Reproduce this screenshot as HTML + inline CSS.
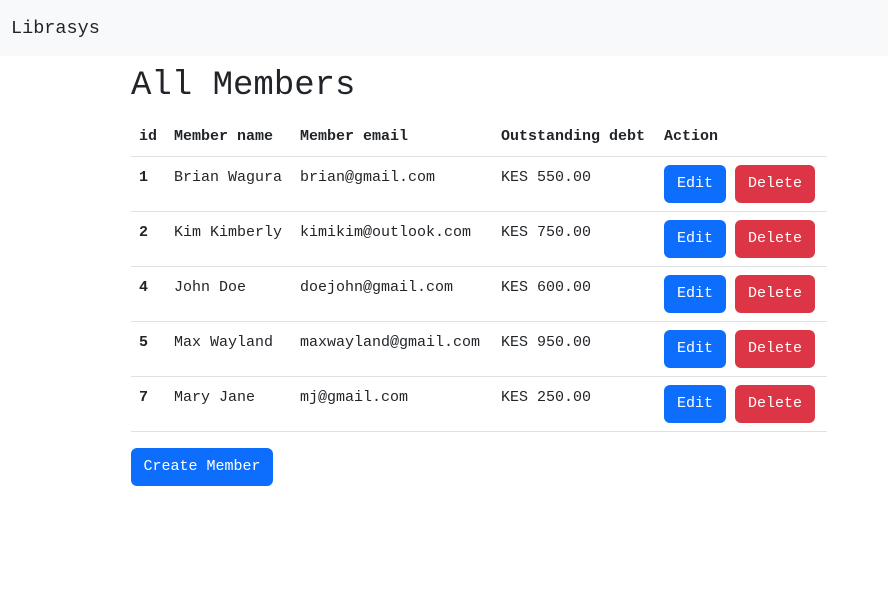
<!DOCTYPE html>
<html><head><meta charset="utf-8"><style>
*{box-sizing:border-box;margin:0;padding:0}
body{width:888px;height:599px;background:#fff;font-family:"Liberation Mono","DejaVu Sans Mono",monospace;color:#212529;position:relative;overflow:hidden}
.nav{position:absolute;left:0;top:0;width:888px;height:56px;background:#f8f9fa}
.brand{position:absolute;left:11px;top:18px;font-size:18.5px;color:#212529}
h1{position:absolute;left:131px;top:64px;font-size:34px;font-weight:normal;line-height:44px}
.t{position:absolute;font-size:15px;line-height:20px}
.b{font-weight:bold}
.line{position:absolute;left:131px;width:696px;height:1px;background:#dee2e6}
.btn{position:absolute;height:38px;border-radius:6px;color:#fff;font-size:15px;line-height:38px;text-align:center}
.e{background:#0d6efd;width:62px;left:664px}
.d{background:#dc3545;width:80px;left:735px}
</style></head><body>
<div class="nav"><div class="brand">Librasys</div></div>
<h1>All Members</h1>
<div class="t b" style="left:139px;top:127px">id</div>
<div class="t b" style="left:174px;top:127px">Member name</div>
<div class="t b" style="left:300px;top:127px">Member email</div>
<div class="t b" style="left:501px;top:127px">Outstanding debt</div>
<div class="t b" style="left:664px;top:127px">Action</div>
<div class="line" style="top:156px"></div>

<div class="t b" style="left:139px;top:168px">1</div>
<div class="t" style="left:174px;top:168px">Brian Wagura</div>
<div class="t" style="left:300px;top:168px">brian@gmail.com</div>
<div class="t" style="left:501px;top:168px">KES 550.00</div>
<div class="btn e" style="top:165px">Edit</div><div class="btn d" style="top:165px">Delete</div>
<div class="line" style="top:211px"></div>

<div class="t b" style="left:139px;top:223px">2</div>
<div class="t" style="left:174px;top:223px">Kim Kimberly</div>
<div class="t" style="left:300px;top:223px">kimikim@outlook.com</div>
<div class="t" style="left:501px;top:223px">KES 750.00</div>
<div class="btn e" style="top:220px">Edit</div><div class="btn d" style="top:220px">Delete</div>
<div class="line" style="top:266px"></div>

<div class="t b" style="left:139px;top:278px">4</div>
<div class="t" style="left:174px;top:278px">John Doe</div>
<div class="t" style="left:300px;top:278px">doejohn@gmail.com</div>
<div class="t" style="left:501px;top:278px">KES 600.00</div>
<div class="btn e" style="top:275px">Edit</div><div class="btn d" style="top:275px">Delete</div>
<div class="line" style="top:321px"></div>

<div class="t b" style="left:139px;top:333px">5</div>
<div class="t" style="left:174px;top:333px">Max Wayland</div>
<div class="t" style="left:300px;top:333px">maxwayland@gmail.com</div>
<div class="t" style="left:501px;top:333px">KES 950.00</div>
<div class="btn e" style="top:330px">Edit</div><div class="btn d" style="top:330px">Delete</div>
<div class="line" style="top:376px"></div>

<div class="t b" style="left:139px;top:388px">7</div>
<div class="t" style="left:174px;top:388px">Mary Jane</div>
<div class="t" style="left:300px;top:388px">mj@gmail.com</div>
<div class="t" style="left:501px;top:388px">KES 250.00</div>
<div class="btn e" style="top:385px">Edit</div><div class="btn d" style="top:385px">Delete</div>
<div class="line" style="top:431px"></div>

<div class="btn" style="left:131px;top:448px;width:142px;background:#0d6efd">Create Member</div>
</body></html>
